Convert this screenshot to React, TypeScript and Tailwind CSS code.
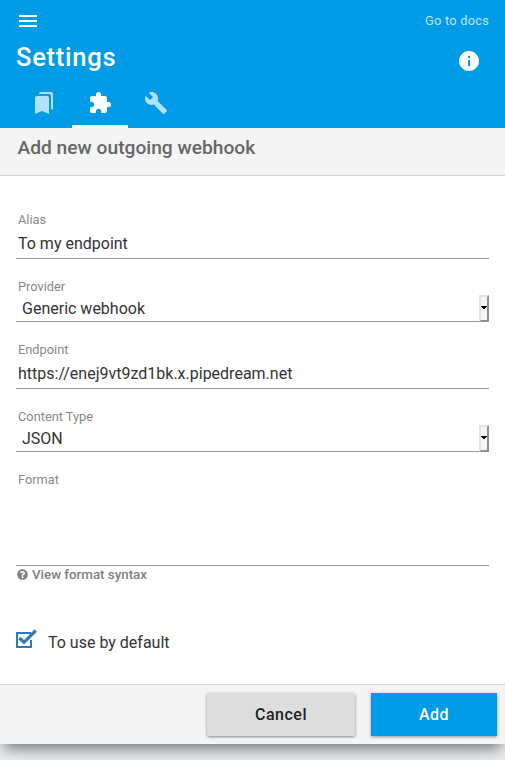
import type { ReactNode } from "react";
import { MdMenu, MdExtension, MdBuild, MdInfo } from "react-icons/md";
import { FaQuestionCircle } from "react-icons/fa";

function BookmarksIcon() {
  return (
    <svg viewBox="0 0 24 24" className="size-6" fill="currentColor">
      <path d="M19 18l2 1V3c0-1.1-.9-2-2-2H8.99C7.89 1 7 1.9 7 3h10c1.1 0 2 .9 2 2v13zM15 5H5c-1.1 0-2 .9-2 2v16l7-3 7 3V7c0-1.1-.9-2-2-2z" />
    </svg>
  );
}

function Tab({ active, children }: { active?: boolean; children: ReactNode }) {
  return (
    <div
      className={
        active
          ? "flex h-12 w-14 items-center justify-center border-b-3 border-white text-white"
          : "flex h-12 w-14 items-center justify-center border-b-3 border-transparent pt-px text-white/70"
      }
    >
      {children}
    </div>
  );
}

function Label({ children }: { children: string }) {
  return <div className="h-5 pt-px pl-[2px] text-[12.8px] leading-5 text-[#888]">{children}</div>;
}

function TextField({ label, value }: { label: string; value: string }) {
  return (
    <div className="flex h-[50px] flex-col border-b border-[#949494]">
      <Label>{label}</Label>
      <div className="pt-[3px] pl-[2px] text-base leading-6 text-[#333]">{value}</div>
    </div>
  );
}

function SelectField({ label, value }: { label: string; value: string }) {
  return (
    <div className="flex h-[46px] flex-col border-b border-[#949494]">
      <Label>{label}</Label>
      <div className="flex h-[26px] shrink-0 items-stretch justify-between pl-[6px] text-base leading-6 text-[#333]">
        <span className="pt-px">{value}</span>
        <span className="mt-[-1px] flex h-[27px] w-[10px] items-center justify-center border-2 border-t-[#e3e3e3] border-r-[#8f8f8f] border-b-[#8f8f8f] border-l-[#e3e3e3] bg-[#f6f6f6]">
          <svg viewBox="0 0 6 4" className="mb-px h-1 w-[6px] shrink-0" shapeRendering="crispEdges">
            <path d="M0 0h6v1H5v1H4v1H2V2H1V1H0z" fill="#000" />
          </svg>
        </span>
      </div>
    </div>
  );
}

export default function App() {
  return (
    <div className="h-[760px] w-full overflow-hidden bg-[#eceff1] font-[Roboto,sans-serif]">
      <div className="flex h-[744px] flex-col bg-white shadow-[0_11px_15px_-7px_rgba(0,0,0,0.2),0_24px_38px_3px_rgba(0,0,0,0.04),0_8px_12px_-4px_rgba(0,0,0,0.35)]">
        <header className="flex h-32 shrink-0 flex-col bg-[#009be6] text-white">
          <div className="flex h-10 items-center justify-between px-4 pt-[2px]">
            <MdMenu className="size-6" />
            <a className="text-[12.8px] tracking-[0.25px] text-white/75">Go to docs</a>
          </div>
          <div className="flex h-10 items-center justify-between pr-6 pl-4">
            <h1 className="pb-[6px] text-[25.6px] leading-7 font-medium tracking-[0.7px]">Settings</h1>
            <MdInfo className="mt-[2px] size-6" />
          </div>
          <nav className="flex h-12 pl-4">
            <Tab>
              <BookmarksIcon />
            </Tab>
            <Tab active>
              <MdExtension className="size-6" />
            </Tab>
            <Tab>
              <MdBuild className="size-6" />
            </Tab>
          </nav>
        </header>

        <div className="h-12 shrink-0 border-b border-[#d4d4d4] bg-[#f4f4f4] pl-[17.5px] text-[19.2px] leading-[39px] font-medium text-[#666]">
          Add new outgoing webhook
        </div>

        <main className="flex flex-1 flex-col px-4 pt-[33px]">
          <TextField label="Alias" value="To my endpoint" />
          <div className="h-[17px]" />
          <SelectField label="Provider" value="Generic webhook" />
          <div className="h-[17px]" />
          <TextField label="Endpoint" value="https://enej9vt9zd1bk.x.pipedream.net" />
          <div className="h-[17px]" />
          <SelectField label="Content Type" value="JSON" />
          <div className="h-[17px]" />
          <div className="h-[97px] border-b border-[#949494]">
            <Label>Format</Label>
          </div>
          <div className="flex h-[18px] items-center gap-1 pl-px text-[13.33px] font-medium text-[#808080]">
            <FaQuestionCircle className="mb-px size-[11px]" />
            <span>View format syntax</span>
          </div>
          <div className="mt-[42px] flex h-8 items-center gap-[11px]">
            <svg viewBox="0 0 21 20" className="mb-[6px] h-5 w-[21px]" fill="none" stroke="#337ab7">
              <path d="M15 4H1v14h14v-7" strokeWidth="2" />
              <path d="M3.300 9L8 13.300L19.800 1.500" strokeWidth="3.200" />
            </svg>
            <span className="pt-px text-base text-[#333]">To use by default</span>
          </div>
        </main>

        <footer className="flex h-[60px] shrink-0 justify-end gap-4 border-t border-[#d4d4d4] bg-[#f4f4f4] pt-2 pr-2 text-base font-medium tracking-[0.5px]">
          <button className="h-[43px] w-[148px] rounded-[2px] bg-[#ddd] text-[#222] shadow-[0_1px_3px_rgba(0,0,0,0.45)]">
            Cancel
          </button>
          <button className="h-[43px] w-[126px] bg-[#009be6] text-white shadow-[0_1px_3px_rgba(0,0,0,0.4)]">
            Add
          </button>
        </footer>
      </div>
    </div>
  );
}
